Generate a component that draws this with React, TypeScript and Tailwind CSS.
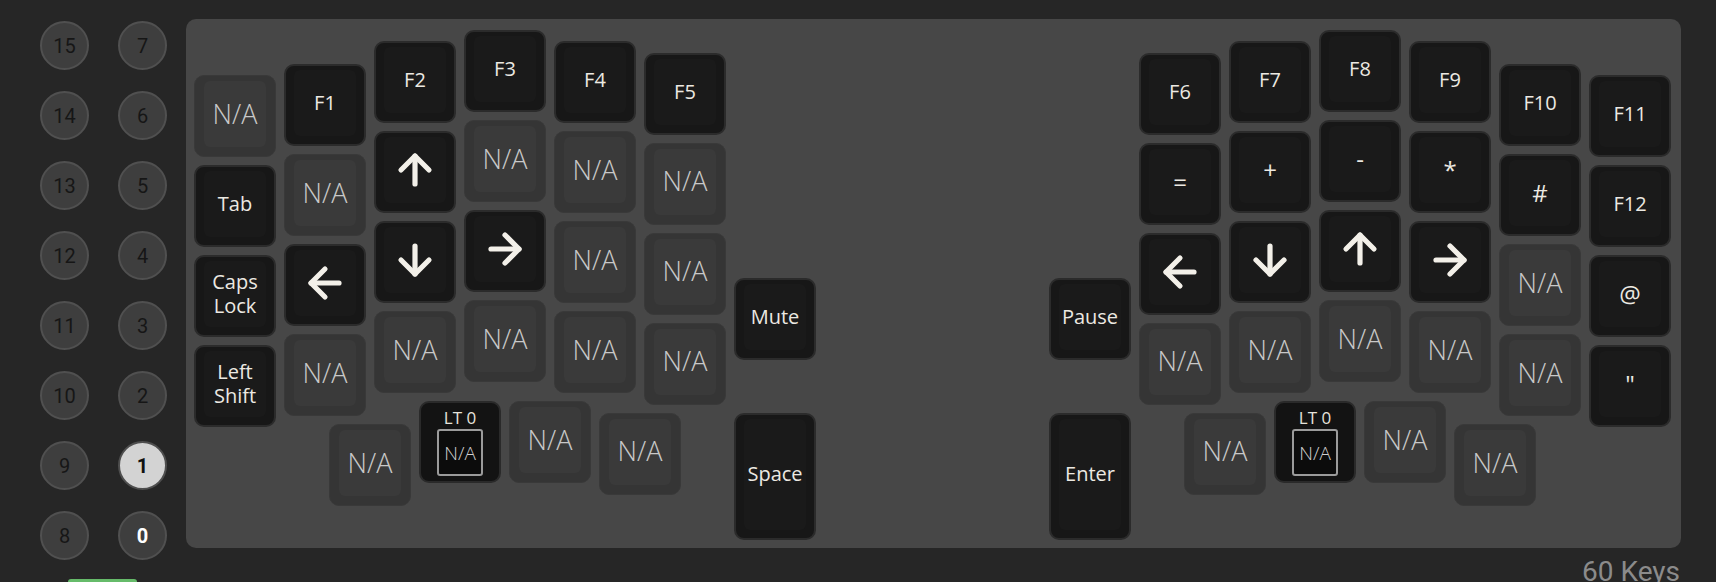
import React from "react";
import { ArrowUp, ArrowDown, ArrowLeft, ArrowRight } from "lucide-react";

type KeyDef = { u: number; v: number; label: string; h?: number };

const U = 90;

const column = (u: number, v0: number, labels: string[]): KeyDef[] =>
  labels.map((label, i) => ({ u, v: v0 + i, label }));

const keys: KeyDef[] = [
  // left half
  ...column(0, 0.5, ["N/A", "Tab", "Caps\nLock", "Left\nShift"]),
  ...column(1, 0.375, ["F1", "N/A", "left", "N/A"]),
  ...column(2, 0.125, ["F2", "up", "down", "N/A"]),
  ...column(3, 0, ["F3", "N/A", "right", "N/A"]),
  ...column(4, 0.125, ["F4", "N/A", "N/A", "N/A"]),
  ...column(5, 0.25, ["F5", "N/A", "N/A", "N/A"]),
  { u: 6, v: 2.75, label: "Mute" },
  { u: 6, v: 4.25, label: "Space", h: 1.5 },
  { u: 1.5, v: 4.375, label: "N/A" },
  { u: 2.5, v: 4.125, label: "LT0" },
  { u: 3.5, v: 4.125, label: "N/A" },
  { u: 4.5, v: 4.25, label: "N/A" },
  // right half
  { u: 9.5, v: 2.75, label: "Pause" },
  { u: 9.5, v: 4.25, label: "Enter", h: 1.5 },
  ...column(10.5, 0.25, ["F6", "=", "left", "N/A"]),
  ...column(11.5, 0.125, ["F7", "+", "down", "N/A"]),
  ...column(12.5, 0, ["F8", "-", "up", "N/A"]),
  ...column(13.5, 0.125, ["F9", "*", "right", "N/A"]),
  ...column(14.5, 0.375, ["F10", "#", "N/A", "N/A"]),
  ...column(15.5, 0.5, ["F11", "F12", "@", '"']),
  { u: 11, v: 4.25, label: "N/A" },
  { u: 12, v: 4.125, label: "LT0" },
  { u: 13, v: 4.125, label: "N/A" },
  { u: 14, v: 4.375, label: "N/A" },
];

const arrows: Record<string, React.ElementType> = {
  up: ArrowUp,
  down: ArrowDown,
  left: ArrowLeft,
  right: ArrowRight,
};

const layers = [15, 7, 14, 6, 13, 5, 12, 4, 11, 3, 10, 2, 9, 1, 8, 0];

const Key = ({ k }: { k: KeyDef }) => {
  const pos = {
    left: 8 + k.u * U,
    top: 11 + k.v * U,
    height: k.h ? k.h * U - 8 : 82,
  };

  if (k.label === "LT0") {
    return (
      <div
        className="absolute w-[82px] rounded-[10px] bg-[#131313] border-2 border-[#2a2a2a] flex flex-col items-center"
        style={pos}
      >
        <div className="mt-[4px] text-[17px] leading-[22px] text-[#e6e3dc] font-['Open_Sans',sans-serif]">
          LT 0
        </div>
        <div className="w-[46px] h-[47px] rounded-[3px] border-2 border-[#9b9b9b] bg-[#0c0c0c] flex items-center justify-center text-[19px] font-light text-[#cfcfcf] font-['Open_Sans',sans-serif]">
          N/A
        </div>
      </div>
    );
  }

  const blank = k.label === "N/A";
  const Arrow = arrows[k.label];
  const single = k.label.length === 1;

  return (
    <div
      className={
        blank
          ? "absolute w-[82px] rounded-[10px] bg-[#353535] border border-[#393939]"
          : "absolute w-[82px] rounded-[10px] bg-[#171717] border-2 border-[#2b2b2b]"
      }
      style={pos}
    >
      <div
        className={
          blank
            ? "absolute top-[5px] left-[9px] right-[9px] bottom-[9px] rounded-[6px] bg-[#3a3a3a] flex items-center justify-center"
            : "absolute top-[4px] left-[8px] right-[8px] bottom-[8px] rounded-[6px] bg-[#1a1a1a] flex items-center justify-center"
        }
      >
        {Arrow ? (
          <Arrow size={48} strokeWidth={2.6} color="#f3f0e9" />
        ) : blank ? (
          <span className="text-[27px] font-light text-[#c8c8c8] font-['Open_Sans',sans-serif]">
            N/A
          </span>
        ) : (
          <span
            className={
              single
                ? "text-[24px] leading-none text-[#ece9e2] font-['Open_Sans',sans-serif] whitespace-pre text-center"
                : "text-[20px] leading-[24px] text-[#ece9e2] font-['Open_Sans',sans-serif] whitespace-pre text-center"
            }
          >
            {k.label}
          </span>
        )}
      </div>
    </div>
  );
};

const LayerButton = ({ n }: { n: number }) => {
  let cls =
    "w-[49px] h-[49px] rounded-full border-2 flex items-center justify-center text-[20px] font-['Roboto',sans-serif] ";
  if (n === 1) cls += "bg-[#d3d3d3] border-[#4e4e4e] text-[#111111] font-bold";
  else if (n === 0) cls += "bg-[#3e3e3e] border-[#505050] text-white font-bold";
  else cls += "bg-[#3e3e3e] border-[#505050] text-[#161616]";
  return <div className={cls}>{n}</div>;
};

export default function App() {
  return (
    <div className="min-h-screen bg-[#262626] flex overflow-hidden">
      <div className="w-[186px] shrink-0 pl-[40px] pt-[21px] flex flex-col">
        <div className="grid grid-cols-2 gap-x-[29px] gap-y-[21px] w-[127px]">
          {layers.map((n) => (
            <LayerButton key={n} n={n} />
          ))}
        </div>
        <div className="mt-[19px] ml-[28px] w-[69px] h-[20px] rounded-t-[3px] bg-[#66bb6a]" />
      </div>

      <div className="flex flex-col pt-[19px]">
        <div className="relative w-[1495px] h-[529px] rounded-[10px] bg-[#474747]">
          {keys.map((k, i) => (
            <Key key={i} k={k} />
          ))}
        </div>
        <div className="mt-[10px] text-right pr-[1px] text-[28px] leading-none text-[#8b8b8b] font-['Roboto',sans-serif]">
          60 Keys
        </div>
      </div>
    </div>
  );
}
